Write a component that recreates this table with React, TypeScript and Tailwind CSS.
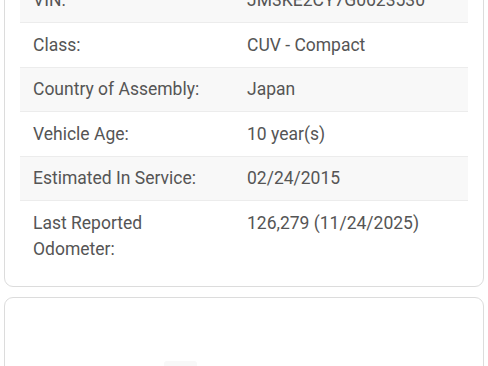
const rows: [string, string][] = [
  ["VIN:", "JM3KE2CY7G0623530"],
  ["Class:", "CUV - Compact"],
  ["Country of Assembly:", "Japan"],
  ["Vehicle Age:", "10 year(s)"],
  ["Estimated In Service:", "02/24/2015"],
  ["Last Reported Odometer:", "126,279 (11/24/2025)"],
];

export default function App() {
  return (
    <div
      className="h-[366px] overflow-hidden bg-white px-[4px]"
      style={{ fontFamily: "Roboto, 'Noto Sans', sans-serif" }}
    >
      {/* Vehicle details card */}
      <div className="mt-[-38.5px] rounded-[9px] border border-[#dcdcdc] px-[15px] pt-[16px] pb-[15.5px]">
        <div className="text-[17.5px] leading-[26px] text-[#555]">
          {rows.map(([label, value], i) => (
            <div
              key={label}
              className={`grid grid-cols-[214px_1fr] border-t border-[#ececec] first:border-t-0 ${
                i % 2 === 0 ? "bg-[#f8f8f8]" : "bg-white"
              }`}
            >
              <div className="px-[13px] py-[8.75px]">{label}</div>
              <div className="px-[13px] py-[8.75px]">{value}</div>
            </div>
          ))}
        </div>
      </div>

      {/* Next card */}
      <div className="mt-[10px] h-[120px] rounded-[9px] border border-[#dcdcdc] pt-[63px]">
        <div className="ml-[159px] h-[40px] w-[33px] rounded-[3px] bg-[#f8f8f8]" />
      </div>
    </div>
  );
}
